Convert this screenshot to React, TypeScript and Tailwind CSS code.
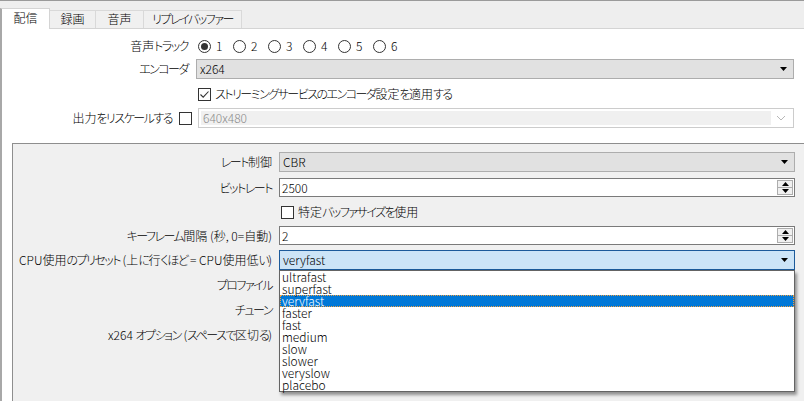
import React from 'react';

// kana runs are set tighter to get closer to the narrow Windows UI kana
const J = ({ t }: { t: string }) => (
  <>
    {t.split(/([\u3040-\u30ff]+)/).map((s, i) =>
      /[\u3040-\u30ff]/.test(s) ? (
        <span key={i} className="tracking-[-1.5px]">
          {s}
        </span>
      ) : (
        s
      ),
    )}
  </>
);

const DownArrow = ({ color = '#000' }: { color?: string }) => (
  <svg width="7" height="4" viewBox="0 0 7 4" className="shrink-0">
    <polygon points="0,0 7,0 3.5,4" fill={color} />
  </svg>
);

const UpArrow = () => (
  <svg width="7" height="4" viewBox="0 0 7 4" className="shrink-0">
    <polygon points="0,4 7,4 3.5,0" fill="#000" />
  </svg>
);

const ComboBox = ({ value, focused = false, children }: { value: string; focused?: boolean; children?: React.ReactNode }) => (
  <div
    className={`relative flex h-[20px] flex-1 items-center border pl-[3px] pr-[6px] ${
      focused ? 'border-[#1c5a9a] bg-[#cce4f7]' : 'border-[#adadad] bg-[#e1e1e1]'
    }`}
  >
    <span className="flex-1 leading-none">{value}</span>
    <DownArrow />
    {children}
  </div>
);

const SpinBox = ({ value }: { value: string }) => (
  <div className="flex h-[19px] flex-1 items-stretch border border-[#7a7a7a] bg-white">
    <span className="flex flex-1 items-center pl-[2px] leading-none">{value}</span>
    <div className="my-[1px] mr-[1px] flex w-[16px] flex-col border border-[#adadad] bg-[#f0f0f0]">
      <div className="flex flex-1 items-center justify-center border-b border-[#adadad]">
        <UpArrow />
      </div>
      <div className="flex flex-1 items-center justify-center">
        <DownArrow />
      </div>
    </div>
  </div>
);

const CheckBox = ({ checked = false }: { checked?: boolean }) => (
  <div className="flex h-[13px] w-[13px] shrink-0 items-center justify-center border border-[#333] bg-white">
    {checked && (
      <svg width="11" height="11" viewBox="0 0 11 11">
        <path d="M1.5 5.5 L4.2 8.2 L9.5 2.5" fill="none" stroke="#333" strokeWidth="1.1" />
      </svg>
    )}
  </div>
);

const Radio = ({ checked = false }: { checked?: boolean }) => (
  <div className="flex h-[13px] w-[13px] shrink-0 items-center justify-center rounded-full border border-[#333] bg-white">
    {checked && <div className="h-[7px] w-[7px] rounded-full bg-[#333]" />}
  </div>
);

const presets = ['ultrafast', 'superfast', 'veryfast', 'faster', 'fast', 'medium', 'slow', 'slower', 'veryslow', 'placebo'];

const tabs = [
  { label: '配信', w: 'w-[50px]' },
  { label: '録画', w: 'w-[46px]' },
  { label: '音声', w: 'w-[48px]' },
  { label: 'リプレイバッファー', w: 'w-[98px]' },
];

const TopLabel = ({ t }: { t: string }) => (
  <div className="w-[186px] shrink-0 whitespace-nowrap text-right">
    <J t={t} />
  </div>
);

const GroupLabel = ({ t }: { t: string }) => (
  <div className="w-[259px] shrink-0 whitespace-nowrap text-right">
    <J t={t} />
  </div>
);

export default function App() {
  return (
    <div className="relative h-[401px] w-[804px] overflow-hidden bg-white text-[12px] font-light text-black font-['Noto_Sans_CJK_JP','Noto_Sans',sans-serif] [font-feature-settings:'palt']">
      {/* tab strip */}
      <div className="flex h-[29px] items-end border-t border-b border-t-[#9a9a9a] border-b-[#d4d4d4] bg-[#eeeeee]">
        {tabs.map((t, i) =>
          i === 0 ? (
            <div
              key={t.label}
              className={`${t.w} -mb-px flex h-[21px] items-center justify-center border-l-2 border-t border-r border-l-[#a8a8a8] border-t-[#d4d4d4] border-r-[#d4d4d4] bg-white pb-[3px]`}
            >
              <J t={t.label} />
            </div>
          ) : (
            <div
              key={t.label}
              className={`${t.w} flex h-[18px] items-center justify-center whitespace-nowrap border-t border-r border-[#d9d9d9] bg-[#f0f0f0] pb-[1px]`}
            >
              <J t={t.label} />
            </div>
          ),
        )}
      </div>

      {/* page body */}
      <div className="flex h-[372px] flex-col border-l-2 border-[#a8a8a8]">
        <div className="mt-[8px] flex h-[20px] items-center">
          <TopLabel t="音声トラック" />
          <div className="ml-[10px] flex items-center">
            {['1', '2', '3', '4', '5', '6'].map((n) => (
              <div key={n} className="flex w-[35px] items-center gap-[5px]">
                <Radio checked={n === '1'} />
                <span>{n}</span>
              </div>
            ))}
          </div>
        </div>

        <div className="mt-[4px] flex h-[20px] items-center pr-[10px]">
          <TopLabel t="エンコーダ" />
          <div className="ml-[8px] flex flex-1">
            <ComboBox value="x264" />
          </div>
        </div>

        <div className="mt-[6px] flex h-[20px] items-center">
          <div className="ml-[196px] flex items-center gap-[4px]">
            <CheckBox checked />
            <span className="whitespace-nowrap">
              <J t="ストリーミングサービスのエンコーダ設定を適用する" />
            </span>
          </div>
        </div>

        <div className="mt-[5px] flex h-[20px] items-center pr-[10px]">
          <div className="w-[170px] shrink-0 whitespace-nowrap text-right">
            <J t="出力をリスケールする" />
          </div>
          <div className="ml-[7px]">
            <CheckBox />
          </div>
          <div className="ml-[6px] flex h-[20px] flex-1 items-center border border-[#cccccc] bg-white p-[2px]">
            <div className="flex h-full flex-1 items-center bg-[#f0f0f0] pl-[2px] leading-none text-[#8a8a8a]">640x480</div>
            <svg width="20" height="8" viewBox="0 0 20 8" className="shrink-0">
              <polyline points="6,2 10,6 14,2" fill="none" stroke="#b8b8b8" strokeWidth="1" />
            </svg>
          </div>
        </div>

        {/* group box */}
        <div className="mt-[15px] ml-[10px] flex h-[300px] w-[800px] shrink-0 flex-col border border-[#8e8e8e] bg-[#f0f0f0] pt-[8px] pr-[16px]">
          <div className="flex h-[20px] items-center">
            <GroupLabel t="レート制御" />
            <div className="ml-[7px] flex flex-1">
              <ComboBox value="CBR" />
            </div>
          </div>

          <div className="mt-[6px] flex h-[19px] items-center">
            <GroupLabel t="ビットレート" />
            <div className="ml-[7px] flex flex-1">
              <SpinBox value="2500" />
            </div>
          </div>

          <div className="mt-[5px] flex h-[20px] items-center">
            <div className="ml-[268px] flex items-center gap-[4px]">
              <CheckBox />
              <span className="whitespace-nowrap">
                <J t="特定バッファサイズを使用" />
              </span>
            </div>
          </div>

          <div className="mt-[4px] flex h-[19px] items-center">
            <GroupLabel t="キーフレーム間隔 (秒, 0=自動)" />
            <div className="ml-[7px] flex flex-1">
              <SpinBox value="2" />
            </div>
          </div>

          <div className="mt-[5px] flex h-[20px] items-center">
            <GroupLabel t="CPU使用のプリセット (上に行くほど = CPU使用低い)" />
            <div className="relative z-10 ml-[7px] flex flex-1">
              <ComboBox value="veryfast" focused />
              {/* open dropdown list */}
              <div className="absolute top-full left-0 w-full border border-[#646464] bg-white shadow-[2px_3px_3px_rgba(0,0,0,0.4)]">
                {presets.map((p) => (
                  <div
                    key={p}
                    className={`flex h-[12px] items-center pl-[2px] leading-[12px] ${
                      p === 'veryfast'
                        ? 'bg-[#0078d7] text-white outline-1 -outline-offset-1 outline-dotted outline-[#f0a040]'
                        : ''
                    }`}
                  >
                    {p}
                  </div>
                ))}
              </div>
            </div>
          </div>

          <div className="mt-[5px] flex h-[20px] items-center">
            <GroupLabel t="プロファイル" />
          </div>
          <div className="mt-[5px] flex h-[20px] items-center">
            <GroupLabel t="チューン" />
          </div>
          <div className="mt-[5px] flex h-[20px] items-center">
            <GroupLabel t="x264 オプション (スペースで区切る)" />
          </div>
        </div>
      </div>
    </div>
  );
}
